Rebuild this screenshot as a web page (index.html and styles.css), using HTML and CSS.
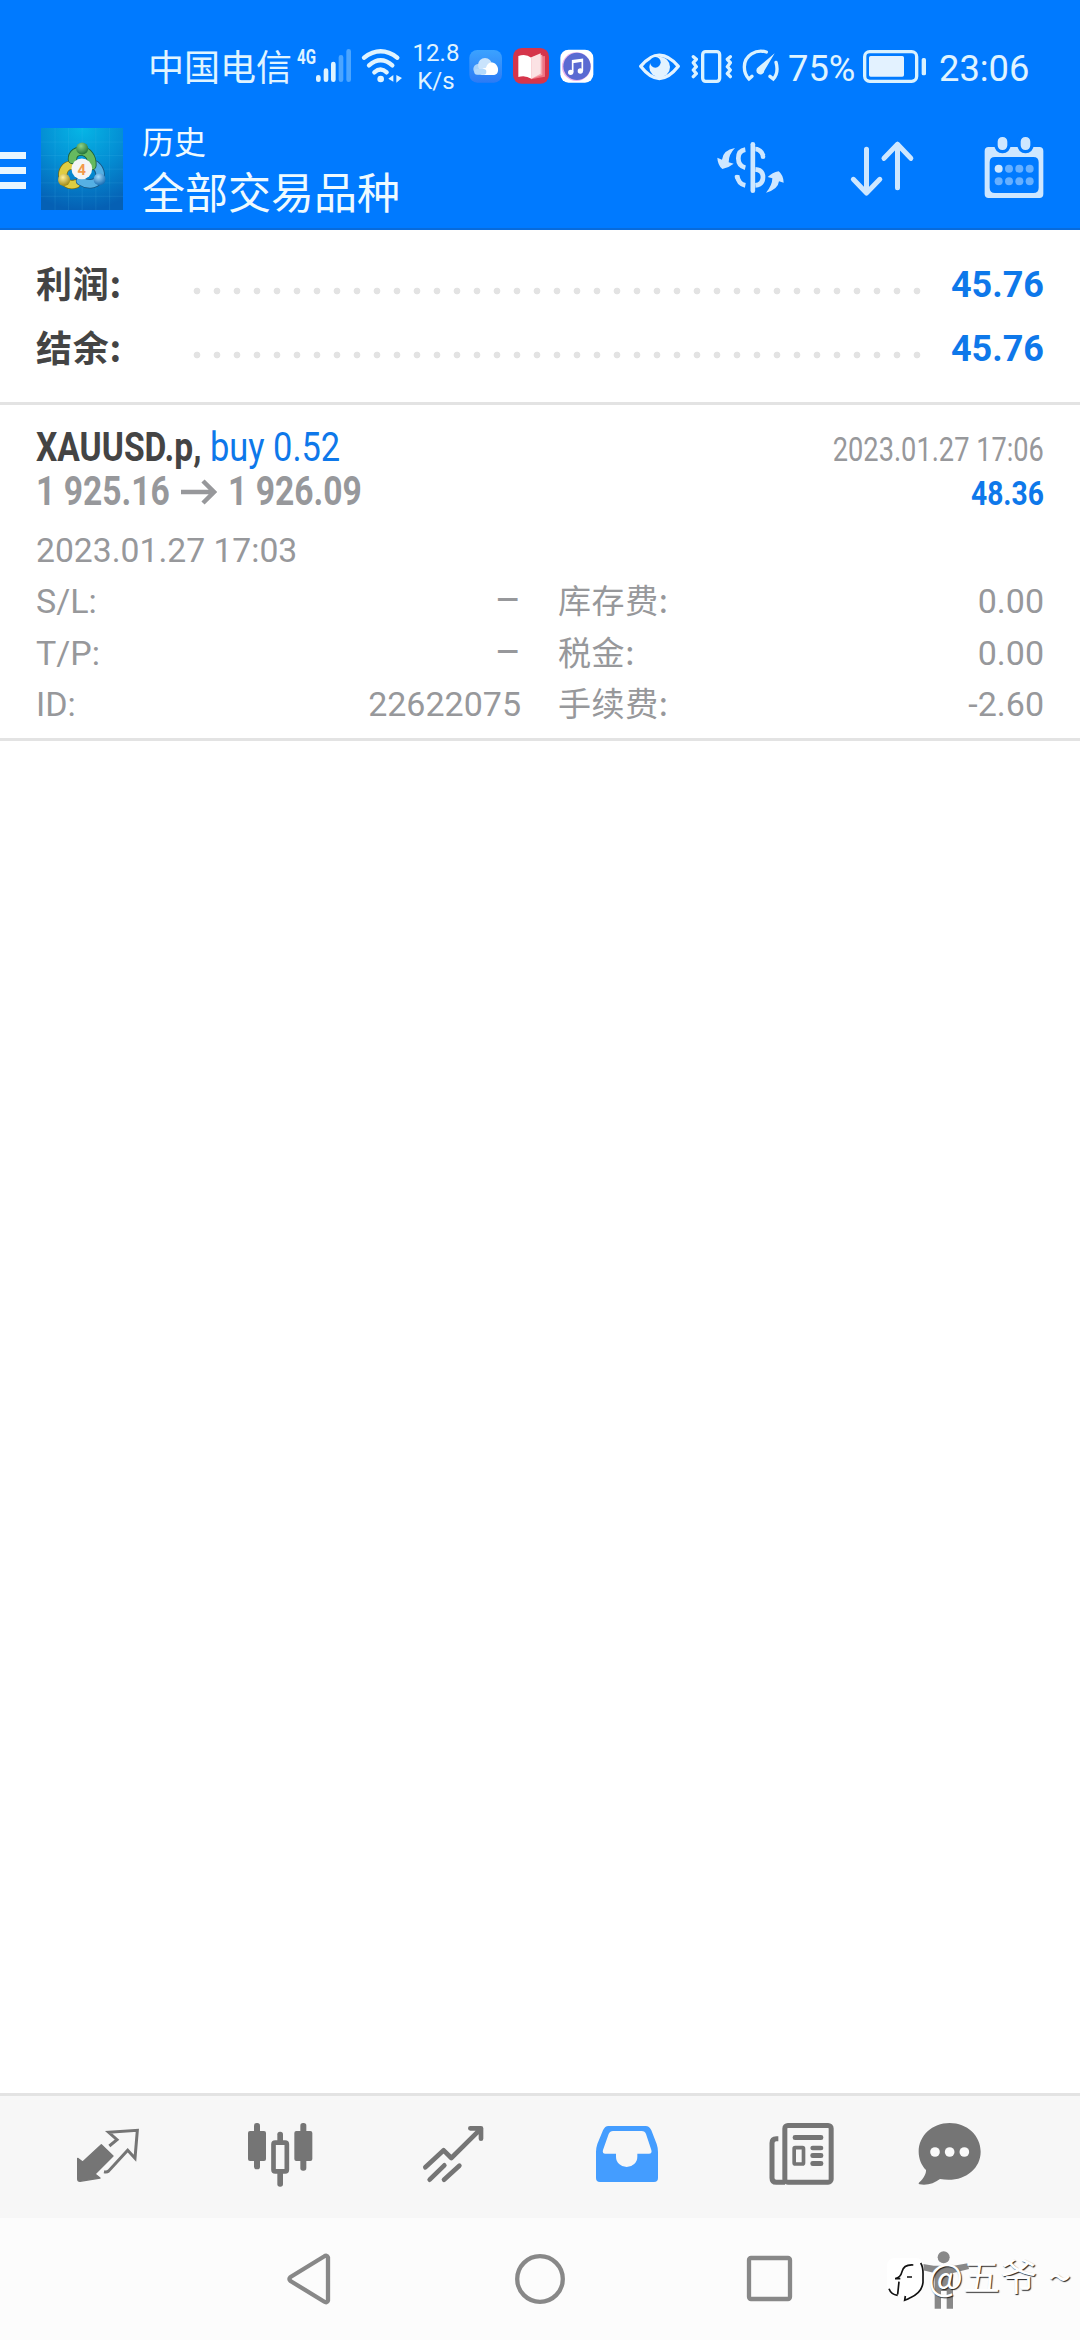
FILE: index.html
```html
<!DOCTYPE html>
<html lang="zh-CN">
<head>
<meta charset="utf-8">
<title>历史</title>
<link rel="stylesheet" href="styles.css">
</head>
<body>
<div class="screen">
  <div class="status-bar">
    <span class="carrier">中国电信</span>
    <span class="network">4G</span>
    <svg class="signal" width="38" height="80" viewBox="555 0 114 240" fill="none" stroke-width="14" stroke-linecap="round">
      <path stroke="#e0f4ff" d="M565 142v7M588 122v27M610 102v47"/>
      <path stroke="#4ba5ff" d="M633 82v67M656 64v85"/>
    </svg>
    <svg class="wifi" width="44" height="80" viewBox="690 0 132 240" fill="none" stroke="#e0f4ff" stroke-width="13" stroke-linecap="round">
      <path d="M702 83Q752 45 802 83M717 106Q752 76 787 106M733 127Q752 110 770 127"/>
      <circle cx="752" cy="147" r="10" fill="#e0f4ff" stroke="none"/>
      <path fill="#e0f4ff" stroke="none" d="M790 135v20l-15-9zM799 135l17 9-17 14z"/>
    </svg>
    <span class="speed">12.8<br>K/s</span>
    <svg class="app-cloud" width="34" height="80" viewBox="1019 0 102 240">
      <defs><linearGradient id="cloudBg" x1="0" y1="0" x2="0" y2="1"><stop offset="0" stop-color="#3ba2ff"/><stop offset="1" stop-color="#2c7bf5"/></linearGradient></defs>
      <rect x="1020" y="60" width="98" height="98" rx="24" fill="url(#cloudBg)"/>
      <circle cx="1048" cy="117" r="16" fill="#a9d3fb"/><circle cx="1067" cy="105" r="21" fill="#c9e3fc"/>
      <path fill="#fff" d="M1053 133c-2-13 8-19 17-20 3-13 13-18 22-15 8 3 11 8 13 14 4 13-2 23-11 23h-36z"/>
      <rect x="1035" y="117" width="36" height="17" rx="8" fill="#b4dafc"/>
    </svg>
    <svg class="app-book" width="36" height="80" viewBox="1149 0 108 240">
      <rect x="1149" y="54" width="108" height="107" rx="26" fill="#d5354b"/>
      <path fill="#ef7583" d="M1203 82l42-4v62l-42 8z"/><path fill="#f6a7ae" d="M1204 82l33-8v61l-33 11z"/>
      <path fill="#fff" d="M1165 78q22-8 39 5v63q-19-12-39-5z"/><path fill="#fbe2e4" d="M1204 82l28-12v61l-28 15z"/>
    </svg>
    <svg class="app-music" width="34" height="80" viewBox="1289 0 102 240">
      <rect x="1290" y="59" width="99" height="99" rx="25" fill="#fff"/>
      <circle cx="1338" cy="110" r="43" fill="#e9b4ec"/><circle cx="1340" cy="109" r="41" fill="#5a6ad2"/>
      <path fill="none" stroke="#fff" stroke-width="5" d="M1327 127V92l29-4v35M1327 97l29-4"/>
      <circle cx="1321" cy="127" r="8" fill="#fff"/><circle cx="1350" cy="123" r="8" fill="#fff"/>
    </svg>
    <svg class="eye" width="44" height="80" viewBox="84 0 132 240">
      <path fill="none" stroke="#e3f3ff" stroke-width="10" stroke-linejoin="round" d="M92 109Q148 42 205 109Q148 182 92 109z"/>
      <circle cx="149" cy="111" r="31" fill="#e3f3ff"/><circle cx="136" cy="97" r="16" fill="#007aff"/>
    </svg>
    <svg class="vibrate" width="42" height="80" viewBox="243 0 126 240" fill="none" stroke="#daf2ff" stroke-width="10" stroke-linecap="round" stroke-linejoin="round">
      <rect x="278" y="65" width="51" height="89" rx="9"/>
      <path d="M250 80l9 8-9 10 9 12-9 10 9 11-9 9M361 80l-9 8 9 10-9 12 9 10-9 11 9 9"/>
    </svg>
    <svg class="gauge" width="38" height="80" viewBox="397 0 114 240" fill="none" stroke="#daf2ff" stroke-width="10" stroke-linecap="round">
      <path d="M470 66C440 57 404 75 404 111Q404 133 418 147l9-8M499 97Q508 128 491 147l-10-8"/>
      <path fill="#daf2ff" stroke="none" d="M495 70l-31 52a12 12 0 1 1-18-11z"/>
    </svg>
    <span class="percent">75%</span>
    <svg class="battery" width="66" height="80" viewBox="756 0 198 240">
      <rect x="764" y="65" width="156" height="89" rx="15" fill="none" stroke="#daf2ff" stroke-width="10"/>
      <rect x="777" y="78" width="105" height="62" rx="5" fill="#e3f2ff"/><rect x="935" y="84" width="13" height="52" rx="5" fill="#daf2ff"/>
    </svg>
    <span class="clock">23:06</span>
  </div>

  <header class="app-bar">
    <svg class="menu" width="26" height="42" viewBox="0 0 26 42" fill="#e8f6ff"><path d="M0 3h26v7H0zM0 18h26v7H0zM0 33h26v7H0z"/></svg>
    <svg class="logo" width="82" height="82" viewBox="122 54 245 245">
      <defs>
        <radialGradient id="logoBg" cx=".5" cy="0" r="1"><stop offset="0" stop-color="#06b6e6"/><stop offset=".5" stop-color="#048fd4"/><stop offset="1" stop-color="#0560b4"/></radialGradient>
        <radialGradient id="green" cx=".4" cy=".3" r=".7"><stop offset="0" stop-color="#8fd488"/><stop offset="1" stop-color="#23743a"/></radialGradient>
        <radialGradient id="gold" cx=".4" cy=".3" r=".7"><stop offset="0" stop-color="#fff19a"/><stop offset="1" stop-color="#a18a17"/></radialGradient>
        <radialGradient id="sky" cx=".4" cy=".3" r=".7"><stop offset="0" stop-color="#a4dafa"/><stop offset="1" stop-color="#1a6fb5"/></radialGradient>
      </defs>
      <path fill="url(#logoBg)" d="M122 54h245v245H122z"/>
      <path stroke="#55c4f2" stroke-opacity=".22" stroke-width="2" d="M164 54v245M204 54v245M245 54v245M286 54v245M327 54v245M122 96h245M122 136h245M122 177h245M122 218h245M122 258h245"/>
      <g fill="none" stroke-linecap="round">
        <path stroke="#746c18" stroke-width="28" d="M214 164C172 168 182 236 226 221"/><path stroke="#e0cd42" stroke-width="23" d="M214 164C172 168 182 236 226 221"/>
        <path stroke="#175582" stroke-width="28" d="M284 165C320 196 284 240 240 212"/><path stroke="#55b0e4" stroke-width="23" d="M284 165C320 196 284 240 240 212"/>
        <path stroke="#1b5c36" stroke-width="28" d="M216 148C215 112 277 112 274 166"/><path stroke="#66b95f" stroke-width="23" d="M216 148C215 112 277 112 274 166"/>
      </g>
      <circle cx="245" cy="115" r="18" fill="url(#green)"/><circle cx="191" cy="209" r="18" fill="url(#gold)"/><circle cx="297" cy="207" r="18" fill="url(#sky)"/>
      <circle cx="244" cy="176" r="31" fill="#f4f5f6"/>
      <text x="244" y="193" text-anchor="middle" class="logo-digit">4</text>
    </svg>
    <div class="titles">
      <div class="title">历史</div>
      <div class="subtitle">全部交易品种</div>
    </div>
    <div class="actions">
      <svg width="68" height="62" viewBox="110 45 204 186" fill="none" stroke="#cee7ff" stroke-width="14">
        <path stroke-linecap="round" d="M217.500 73v139"/>
        <path d="M195 89Q174 92 174 115 174 138 195 143M225 87Q236 87 244 98L249 108M225 148Q248 150 248 171 248 194 225 196M170 166Q174 192 195 196"/>
        <circle cx="248" cy="110" r="7" fill="#cee7ff" stroke="none"/><circle cx="170" cy="171" r="7" fill="#cee7ff" stroke="none"/>
        <path fill="#cee7ff" stroke="none" d="M164 84Q128 90 125 119L111 113Q112 135 126 147 147 142 160 131L145 127Q145 103 164 84zM257 218Q293 209 296 184L310 188Q309 165 295 154 276 158 262 171L276 175Q276 196 257 218z"/>
      </svg>
      <svg class="sort" width="64" height="62" viewBox="510 45 192 186" fill="none" stroke="#cee7ff" stroke-width="15" stroke-linecap="round" stroke-linejoin="round"><path d="M559.500 88v130M520 178l39.500 41 40-41M652.500 203V73M612 115l40.500-42 40 42"/></svg>
      <svg width="60" height="62" viewBox="913 45 180 186">
        <path fill="#cee7ff" fill-rule="evenodd" d="M927 81h152q12 0 12 12v129q0 12-12 12H927q-12 0-12-12V93q0-12 12-12zM946 111q-16 0-16 16v76q0 16 16 16h115q16 0 16-16v-76q0-16-16-16z"/>
        <g fill="#cee7ff" stroke="#007aff" stroke-width="10"><rect x="949" y="46" width="39" height="49" rx="19"/><rect x="1018" y="46" width="39" height="49" rx="19"/></g>
        <circle cx="957" cy="146" r="12" fill="#cee7ff"/>
        <g fill="#67b0ff"><circle cx="988" cy="146" r="12"/><circle cx="1019" cy="146" r="12"/><circle cx="1050" cy="146" r="12"/><circle cx="957" cy="184" r="12"/><circle cx="988" cy="184" r="12"/><circle cx="1019" cy="184" r="12"/><circle cx="1050" cy="184" r="12"/></g>
      </svg>
    </div>
  </header>

  <section class="summary">
    <div class="summary-row"><span class="label">利润:</span><span class="dots"></span><span class="amount">45.76</span></div>
    <div class="summary-row"><span class="label">结余:</span><span class="dots"></span><span class="amount">45.76</span></div>
  </section>

  <section class="deal">
    <div class="deal-line">
      <span class="symbol">XAUUSD.p,</span><span class="side">buy 0.52</span>
      <span class="close-time">2023.01.27 17:06</span>
    </div>
    <div class="deal-line prices">
      <span class="price">1 925.16</span>
      <svg class="arrow" width="36" height="30" viewBox="0 0 36 30" fill="none" stroke="#97989b" stroke-width="4.500"><path d="M0 15h33M22 4l11 11-11 11"/></svg>
      <span class="price">1 926.09</span>
      <span class="profit">48.36</span>
    </div>
    <div class="open-time">2023.01.27 17:03</div>
    <div class="details">
      <span>S/L:</span><span class="num none">–</span><span class="cjk">库存费:</span><span class="num">0.00</span>
      <span>T/P:</span><span class="num none">–</span><span class="cjk">税金:</span><span class="num">0.00</span>
      <span>ID:</span><span class="num">22622075</span><span class="cjk">手续费:</span><span class="num">-2.60</span>
    </div>
  </section>

  <main class="empty"></main>

  <nav class="tabs">
    <svg viewBox="99 126 210 210">
      <path fill="#757575" stroke="#757575" stroke-width="4" stroke-linejoin="round" d="M113 235l15 11 56-52 35 34-54 54 15 12-60 10q-7 0-7-7z"/>
      <path fill="none" stroke="#757575" stroke-width="9" d="M208 198l23-19-25-22 86-6-7 84-22-24-57 62q-5 4-14 2"/>
    </svg>
    <svg viewBox="618 126 210 210" fill="#757575">
      <rect x="624" y="153" width="54" height="90" rx="6"/><rect x="642" y="129" width="18" height="139" rx="8"/>
      <rect x="763" y="153" width="54" height="90" rx="6"/><rect x="781" y="129" width="18" height="143" rx="8"/>
      <rect x="712" y="155" width="17" height="35" rx="8"/><rect x="712" y="270" width="17" height="50" rx="8"/>
      <rect x="700.500" y="188" width="40" height="86" rx="5" fill="none" stroke="#757575" stroke-width="14"/>
    </svg>
    <svg viewBox="1137 126 210 210" fill="none" stroke="#757575" stroke-width="14" stroke-linecap="round" stroke-linejoin="round"><path d="M1156 262l55-51 23 23 89-88M1291 145h32v31M1169 299l44-43M1212 299l46-42"/></svg>
    <svg viewBox="156 126 210 210"><path fill="#449dff" fill-rule="evenodd" d="M205 138H317Q328 138 334 151L350 192Q354 204 354 216V294Q354 306 342 306H180Q168 306 168 294V216Q168 204 172 192L189 151Q195 138 205 138zM219 153Q210 153 206 162L189 210Q186 221 196 221H228V230A32 31 0 0 0 292 230V221H327Q337 221 334 210L318 162Q315 153 305 153z"/></svg>
    <svg viewBox="675 126 210 210" fill="#757575">
      <g fill="none" stroke="#757575" stroke-width="15"><rect x="734.500" y="136.500" width="139" height="170" rx="9"/><path d="M715 176h-6q-13 0-13 13v105q0 13 13 13h26"/></g>
      <rect x="758" y="165" width="92" height="15" rx="7"/><rect x="811" y="197" width="39" height="14" rx="7"/><rect x="811" y="219" width="39" height="15" rx="7"/><rect x="811" y="243" width="39" height="15" rx="7"/>
      <rect x="762.500" y="203" width="28" height="49" rx="3" fill="none" stroke="#757575" stroke-width="11"/>
    </svg>
    <svg viewBox="1120 126 210 210">
      <path fill="#757575" d="M1227 129c52 0 93 38 93 86 0 55-55 95-122 82-17 13-38 20-61 16-4-1-4-3-1-6 15-13 21-29 20-37-14-15-22-34-22-55 0-48 41-86 93-86z"/>
      <g fill="#fafafa"><circle cx="1183" cy="216" r="14.500"/><circle cx="1227" cy="216" r="14.500"/><circle cx="1271" cy="216" r="14.500"/></g>
    </svg>
  </nav>

  <div class="system-nav">
    <svg class="nav-back" width="44" height="54" viewBox="0 0 44 54"><path fill="none" stroke="#888" stroke-width="4.300" stroke-linejoin="round" d="M41 5.500v43q-1 3-4 1L3.500 29q-2-2 0-4L37 4.500q3-2 4 1z"/></svg>
    <svg class="nav-home" width="54" height="54" viewBox="0 0 54 54"><circle cx="27" cy="27" r="22.800" fill="none" stroke="#888" stroke-width="4.300"/></svg>
    <svg class="nav-recent" width="48" height="54" viewBox="0 0 48 54"><rect x="4" y="6" width="41" height="41" rx="2" fill="none" stroke="#888" stroke-width="4.300"/></svg>
    <div class="accessibility">
      <svg width="52" height="60" viewBox="175 88 156 180" fill="#888"><circle cx="252" cy="110" r="18"/><path d="M177 128l45 7h60l42-7 4 17-48 12v107h-19v-53h-17v53h-19V157l-48-11z"/></svg>
      <div class="watermark">
        <svg width="42" height="50" viewBox="74 116 126 150">
          <path fill="#fff" d="M105 122h60q25 0 25 25v50q0 26-28 42l-29 12 2-13-22-3q-33-2-33-30v-58q0-25 25-25z"/>
          <path fill="none" stroke="#111" stroke-width="5" d="M159 143q-29-2-34 20-4 17-20 21M104 184h16M140 179h15M116 193l-4 38M181 137q8 12 7 40v18q-3 31-38 46-6 4-17 8l2-13M86 214q6 17 26 20"/>
        </svg>
        <span class="wm-text">@五爷</span><span class="wm-tilde">~</span>
      </div>
    </div>
  </div>
</div>
</body>
</html>
```
FILE: styles.css
```css
* { box-sizing: border-box; }
body { margin: 0; background: #fff; font-family: Roboto, "Noto Sans CJK SC", sans-serif; }
svg { display: block; flex: none; }
span { white-space: nowrap; }
.screen { display: flex; flex-direction: column; width: 1080px; height: 2340px; overflow: hidden; }

.status-bar { display: flex; align-items: flex-start; height: 120px; padding: 30px 0 0 148px; background: #007aff; color: #e0f4ff; }
.status-bar > * { flex: none; }
.carrier { width: 145px; font: 36px/71px "Noto Sans CJK SC", sans-serif; }
.network { width: 22px; margin-left: 4px; font-size: 21px; font-weight: 700; line-height: 54px; transform: scaleX(.72); transform-origin: left; }
.signal { margin-left: -4px; }
.wifi { margin-left: 7px; }
.speed { width: 48px; margin-left: 8px; padding-top: 9px; font-size: 24px; line-height: 28px; text-align: center; }
.app-cloud { margin-left: 9px; }
.app-book { margin-left: 10px; }
.app-music { margin-left: 11px; }
.eye { margin-left: 44px; }
.vibrate { margin-left: 9px; }
.gauge { margin-left: 9px; }
.percent { width: 68px; margin-left: 8px; font-size: 37px; line-height: 77px; transform: scaleX(.98); transform-origin: left; }
.battery { margin-left: 6px; }
.clock { margin-left: 11px; font-size: 37px; line-height: 77px; transform: scaleX(.98); transform-origin: left; }

.app-bar { display: flex; height: 110px; background: #007aff; border-bottom: 2px solid #086bdb; color: #effaff; }
.menu { margin-top: 29px; }
.logo { margin: 8px 0 0 15px; }
.logo-digit { font: 700 44px Roboto, sans-serif; fill: #f29a4b; }
.titles { margin-left: 19px; font-family: "Noto Sans CJK SC", sans-serif; }
.title { height: 40px; font-size: 32px; line-height: 40px; }
.subtitle { font-size: 43px; line-height: 60px; }
.actions { display: flex; margin: 15px 36px 0 auto; }
.actions svg { overflow: visible; }
.sort { margin: 0 70px 0 65px; }

.summary { height: 175px; padding: 22px 36px 0; border-bottom: 3px solid #e3e3e3; }
.summary-row { display: flex; align-items: center; height: 64px; }
.label { width: 151px; color: #444; font: 700 36px/60px "Noto Sans CJK SC", sans-serif; height: 64px; letter-spacing: .8px; }
.dots { width: 740px; height: 8px; margin-top: 14px; background: radial-gradient(circle, #e3e3e3 3px, transparent 3.700px) 0 0 / 20px 8px; }
.amount { margin-left: auto; padding-top: 1px; color: #0e78ea; font-size: 36px; font-weight: 700; }

.deal { height: 336px; padding: 21px 36px 0; border-bottom: 3px solid #e3e3e3; color: #97989b; }
.deal-line { display: flex; height: 44px; font-size: 40px; line-height: 44px; }
.symbol { width: 174px; color: #444; font-weight: 700; transform: scaleX(.84); transform-origin: left; }
.side { color: #0e78ea; transform: scaleX(.86); transform-origin: left; }
.close-time { margin-left: auto; font-size: 34px; line-height: 46px; transform: scaleX(.8); transform-origin: right; }
.price { width: 145px; font-weight: 700; transform: scaleX(.84); transform-origin: left; }
.arrow { margin: 7px 11px 0 0; }
.profit { margin-left: auto; color: #0e78ea; font-size: 34px; font-weight: 700; line-height: 47px; transform: scaleX(.83); transform-origin: right; }
.open-time { height: 61px; padding-top: 8px; font-size: 34px; line-height: 56px; transform: scaleX(.99); transform-origin: left; }
.details { display: grid; grid-template-columns: 200px 285px 240px 1fr; grid-auto-rows: 51.700px; font-size: 34px; line-height: 52px; }
.num { text-align: right; }
.none { font-size: 40px; }
.cjk { padding-left: 37px; font-family: "Noto Sans CJK SC", sans-serif; font-size: 33px; line-height: 49px; letter-spacing: .6px; }
.empty { flex: 1; }

.tabs { display: grid; grid-template-columns: repeat(5, 173px) 124px; align-items: center; justify-items: center; height: 125px; padding-left: 21.500px; background: #f7f7f7; border-top: 3px solid #e3e3e3; }
.tabs svg { width: 70px; height: 70px; }
.system-nav { display: flex; align-items: flex-start; height: 122px; padding: 34px 0 0 287px; background: #fcfcfc; }
.nav-home { margin-left: 182px; }
.nav-recent { margin-left: 178px; }
.accessibility { position: relative; margin-left: 125px; }
.accessibility > svg { margin-top: -2px; }
.watermark { position: absolute; left: -33px; top: 4px; display: flex; color: #fff; font: 37px/38px "Noto Sans CJK SC", sans-serif; text-shadow: 1px 1px 1px #222; }
.wm-text { margin-left: 1px; }
.wm-tilde { margin-left: 11px; font-size: 42px; }
```
